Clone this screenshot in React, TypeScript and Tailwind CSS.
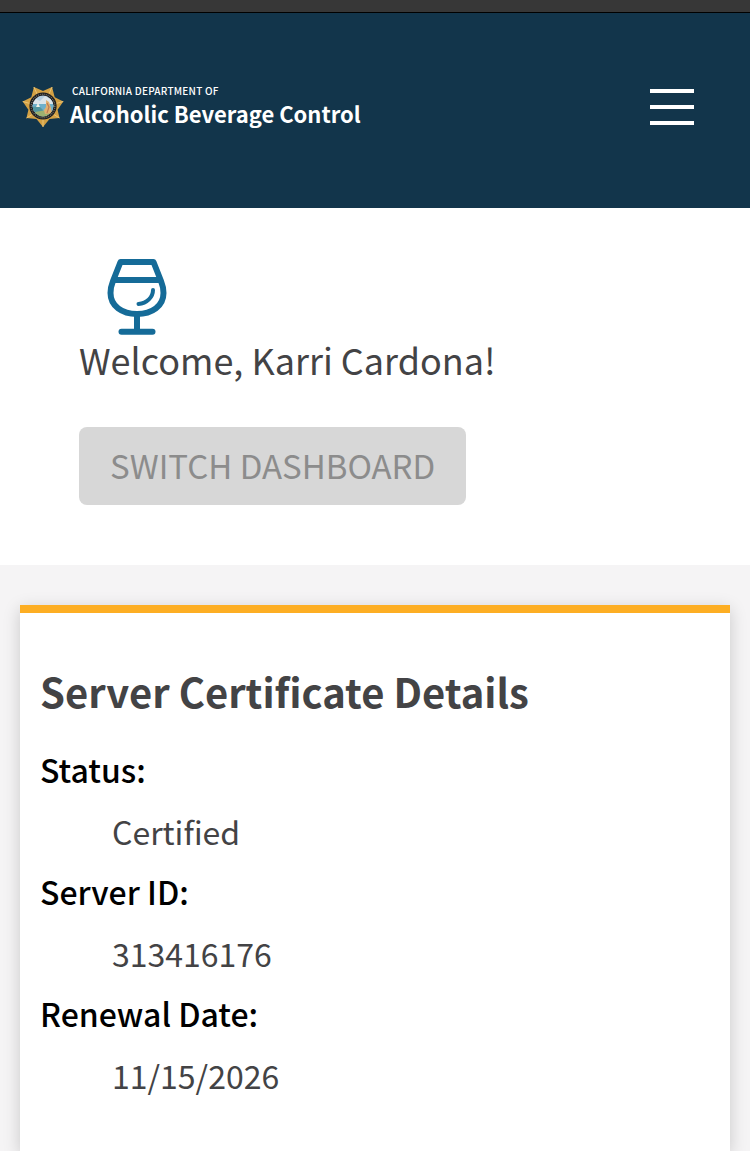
import React from 'react'

const details = [
    { label: 'Status:', value: 'Certified' },
    { label: 'Server ID:', value: '313416176' },
    { label: 'Renewal Date:', value: '11/15/2026' },
];

const Seal = () => (
    <svg className="size-[42px] shrink-0" viewBox="0 0 42 42" aria-hidden="true">
        <path d="M21 41L14.5 33L4.5 32L6.4 23.8L.7 15.5L9.3 11.2L11.9 1L21 5L30.1 1L32.7 11.2L41.3 15.5L35.6 23.8L37.5 32L27.5 33Z" fill="#d3a144" />
        <path d="M21 41V33M4.5 32L11 28M.7 15.500L8 17.500M11.9 1L15.500 9M30.1 1L26.500 9M41.3 15.500L34 17.500M37.5 32L31 28" stroke="#eac373" strokeWidth="1" />
        <circle cx="21" cy="20" r="13.6" fill="#191b20" />
        <circle cx="21" cy="20" r="11.8" fill="none" stroke="#77715f" strokeWidth="1.4" strokeDasharray="1 1" />
        <clipPath id="seal-inner">
            <circle cx="21" cy="20" r="10.4" />
        </clipPath>
        <g clipPath="url(#seal-inner)">
            <path d="M10 8H32V32H10Z" fill="#b5cfe0" />
            <path d="M10 17L14 13L18 15L23 10L32 15V22H10Z" fill="#dce5ea" />
            <path d="M10 18H32V25H10Z" fill="#6fb0ca" />
            <path d="M10 21L17 20L21 24L19 30H10Z" fill="#5296a0" />
            <path d="M13 26L25 24L32 25V32H14Z" fill="#9db070" />
            <path d="M24 14L27 16L29 22L30 27L23 28L22 24L24 21Z" fill="#e0b070" />
            <path d="M25 17L27 21L25 27" stroke="#c07a50" strokeWidth="1.2" fill="none" />
            <path d="M16 17L18 21H14Z" fill="#f2f2e9" />
        </g>
    </svg>
);

const GlassIcon = () => (
    <svg className="ml-7 w-[60px] h-[76px]" viewBox="0 0 60 76" fill="none" stroke="#156b98" strokeLinejoin="round" aria-hidden="true">
        <path d="M13.5 3H46.5L54 22C56 27 56.500 30 56.500 34C56.500 47 45 55 30 55C15 55 3.500 47 3.500 34C3.500 30 4 27 6 22Z" strokeWidth="6" />
        <path d="M6 21H54" strokeWidth="6" />
        <path d="M46 31C46 38 40 44.500 31.500 45" strokeWidth="4" strokeLinecap="round" />
        <path d="M30 55V73" strokeWidth="6" />
        <path d="M14.500 72.700H45.500" strokeWidth="6" strokeLinecap="round" />
    </svg>
);

const App = () => {
    return (
        <div className="min-h-screen bg-[#f5f4f5] text-[#434345] flex flex-col font-['Noto_Sans_CJK_SC',sans-serif]">
            <div className="h-[13px] bg-[#373737] border-b border-black" />
            <header className="bg-[#12354b] flex items-center justify-between pt-[70px] pb-[77px] pl-[22px] pr-14">
                <a href="#" className="flex items-center gap-[6px] text-white">
                    <Seal />
                    <span className="flex flex-col pb-1">
                        <span className="text-[10px] leading-[16px] pl-[2px] font-medium tracking-wide">CALIFORNIA DEPARTMENT OF</span>
                        <span className="text-[22px] leading-[28px] font-bold">Alcoholic Beverage Control</span>
                    </span>
                </a>
                <button type="button" aria-label="Menu" className="flex flex-col gap-3 w-11">
                    <span className="h-1 w-full bg-white" />
                    <span className="h-1 w-full bg-white" />
                    <span className="h-1 w-full bg-white" />
                </button>
            </header>
            <section className="bg-white px-[79px] pt-[51px] pb-[60px]">
                <GlassIcon />
                <h1 className="text-[36px] leading-[48px]">Welcome, Karri Cardona!</h1>
                <button type="button" className="mt-11 h-[78px] px-[31px] rounded-lg bg-[#d7d7d7] text-[#8c8c8c] text-[33px]">SWITCH DASHBOARD</button>
            </section>
            <main className="grow flex flex-col px-5 pt-10">
                <section className="grow bg-white border-t-8 border-[#fdae23] px-5 pt-[50px] pb-[40px] shadow-[0_4px_16px_rgba(0,0,0,0.18)]">
                    <h2 className="text-[40px] leading-[56px] font-bold">Server Certificate Details</h2>
                    <dl className="mt-5 text-[32px] leading-[60px]">
                        {details.map(({ label, value }) => (
                            <React.Fragment key={label}>
                                <dt className="font-medium text-black mb-[2px]">{label}</dt>
                                <dd className="pl-[72px]">{value}</dd>
                            </React.Fragment>
                        ))}
                    </dl>
                </section>
            </main>
        </div>
    );
};

export default App
